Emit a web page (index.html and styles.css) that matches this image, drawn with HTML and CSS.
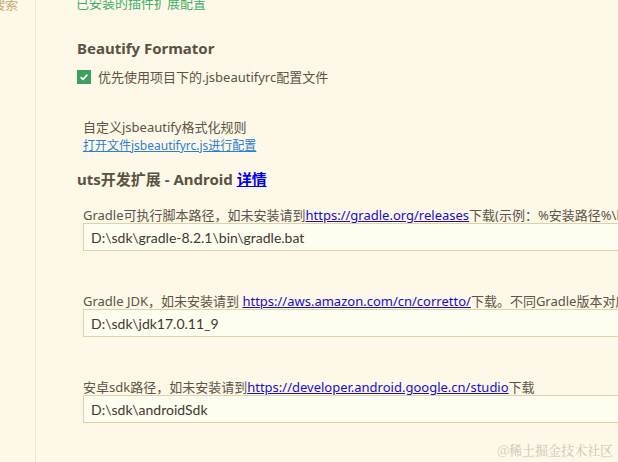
FILE: index.html
```html
<!DOCTYPE html>
<html lang="zh-CN">
<head>
    <meta charset="UTF-8">
    <meta name="viewport" content="width=device-width, initial-scale=1.0">
    <title>插件配置</title>
    <link rel="stylesheet" href="styles.css">
</head>
<body>
    <div class="sidebar">
        <div class="sidebar-item">搜索</div>
    </div>

    <div class="main">
        <div class="section-title">已安装的插件扩展配置</div>

        <h2 class="group-title">Beautify Formator</h2>
        <label class="check-row">
            <span class="checkbox">
                <svg width="10" height="10" viewBox="0 0 10 10"><path d="M1.6 5.2 L4 7.4 L8.4 2.6" fill="none" stroke="#ffffff" stroke-width="1.6"/></svg>
            </span>
            <span>优先使用项目下的.jsbeautifyrc配置文件</span>
        </label>

        <div class="setting custom-rule">
            <div class="setting-label">自定义jsbeautify格式化规则</div>
            <a class="file-link" href="#">打开文件jsbeautifyrc.js进行配置</a>
        </div>

        <h2 class="group-title uts-title">uts开发扩展 - Android <a href="#">详情</a></h2>

        <div class="setting">
            <div class="setting-label">Gradle可执行脚本路径，如未安装请到<a href="#">https://gradle.org/releases</a>下载(示例：%安装路径%\bin\gradle.bat)</div>
            <input class="path-input" type="text" value="D:\sdk\gradle-8.2.1\bin\gradle.bat">
        </div>

        <div class="setting">
            <div class="setting-label">Gradle JDK，如未安装请到 <a href="#">https://aws.amazon.com/cn/corretto/</a>下载。不同Gradle版本对应的JDK版本不同</div>
            <input class="path-input" type="text" value="D:\sdk\jdk17.0.11_9">
        </div>

        <div class="setting">
            <div class="setting-label">安卓sdk路径，如未安装请到<a href="#">https://developer.android.google.cn/studio</a>下载</div>
            <input class="path-input" type="text" value="D:\sdk\androidSdk">
        </div>
    </div>

    <div class="watermark">@稀土掘金技术社区</div>
</body>
</html>
```

FILE: styles.css
```css
body {
    margin: 0;
    height: 100vh;
    overflow: hidden;
    display: flex;
    background-color: #fdf8e7;
    font-family: "Noto Sans", "Noto Sans CJK SC", sans-serif;
    color: #5c5548;
    font-size: 13px;
}

.sidebar {
    width: 35px;
    flex-shrink: 0;
    border-right: 1px solid #efe6cb;
    overflow: hidden;
}

.sidebar-item {
    margin-top: -6px;
    margin-left: -8px;
    color: #c9ad72;
    font-size: 13px;
    white-space: nowrap;
}

.main {
    padding-left: 41px;
    width: 700px;
    flex-shrink: 0;
}

.section-title {
    margin-top: -6px;
    margin-left: -1px;
    color: #3fae6a;
    font-size: 13px;
    line-height: 18px;
}

.group-title {
    margin: 0;
    font-size: 15px;
    font-weight: bold;
    color: #5a5344;
    line-height: 20px;
}

.group-title:first-of-type {
    margin-top: 26px;
}

.group-title a {
    color: #0000ee;
}

.check-row {
    display: flex;
    align-items: center;
    gap: 7px;
    margin-top: 10px;
    line-height: 18px;
}

.checkbox {
    width: 14px;
    height: 14px;
    background-color: #3ea05f;
    display: flex;
    align-items: center;
    justify-content: center;
}

.setting {
    padding-left: 6px;
    margin-top: 41px;
}

.custom-rule {
    margin-top: 32px;
}

.setting-label {
    line-height: 18px;
    white-space: nowrap;
}

.setting-label a {
    color: #1a0dcc;
}

.file-link {
    color: #2c80d3;
    font-size: 12px;
    line-height: 17px;
}

.uts-title {
    margin-top: 15px;
}

.uts-title + .setting {
    margin-top: 17px;
}

.path-input {
    display: block;
    box-sizing: border-box;
    width: 620px;
    height: 28px;
    margin-top: -1px;
    padding: 0 7px;
    border: 1px solid #ddd3a8;
    background-color: #fffcf0;
    font-family: Lato, "Noto Sans", sans-serif;
    font-size: 14px;
    color: #3f3a31;
    outline: none;
}

.watermark {
    position: absolute;
    right: 5px;
    bottom: 3px;
    font-family: "Noto Serif CJK SC", "Noto Sans CJK SC", serif;
    font-size: 13px;
    color: #cbc5b6;
}
```
